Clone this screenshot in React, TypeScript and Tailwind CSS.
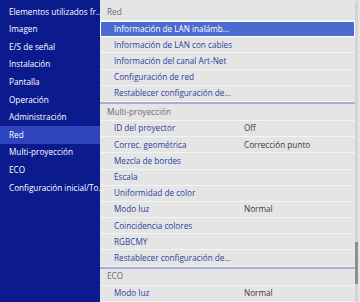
const menu = [
  "Elementos utilizados fr...",
  "Imagen",
  "E/S de señal",
  "Instalación",
  "Pantalla",
  "Operación",
  "Administración",
  "Red",
  "Multi-proyección",
  "ECO",
  "Configuración inicial/To...",
];

type Row = { label: string; value?: string; active?: boolean };
type Group = { title: string; rows: Row[] };

const groups: Group[] = [
  {
    title: "Red",
    rows: [
      { label: "Información de LAN inalámb...", active: true },
      { label: "Información de LAN con cables" },
      { label: "Información del canal Art-Net" },
      { label: "Configuración de red" },
      { label: "Restablecer configuración de..." },
    ],
  },
  {
    title: "Multi-proyección",
    rows: [
      { label: "ID del proyector", value: "Off" },
      { label: "Correc. geométrica", value: "Corrección punto" },
      { label: "Mezcla de bordes" },
      { label: "Escala" },
      { label: "Uniformidad de color" },
      { label: "Modo luz", value: "Normal" },
      { label: "Coincidencia colores" },
      { label: "RGBCMY" },
      { label: "Restablecer configuración de..." },
    ],
  },
  {
    title: "ECO",
    rows: [{ label: "Modo luz", value: "Normal" }],
  },
];

export default function App() {
  return (
    <div
      className="flex h-[302px] w-[360px] overflow-hidden bg-[#e5e5e5] text-[8.2px]"
      style={{ fontFamily: '"Open Sans", "Noto Sans", sans-serif' }}
    >
      {/* Menú lateral */}
      <aside className="flex w-[100px] shrink-0 flex-col bg-[#0b1a8d] pt-[3px]">
        {menu.map((item) => (
          <div
            key={item}
            className={
              item === "Red"
                ? "flex h-[17.6px] items-center whitespace-nowrap bg-[#2e44bd] pl-[9px] text-white"
                : "flex h-[17.6px] items-center whitespace-nowrap pl-[9px] text-white"
            }
          >
            {item}
          </div>
        ))}
      </aside>

      {/* Lista de ajustes */}
      <div className="flex flex-1">
        <div className="flex flex-1 flex-col pt-[4px]">
          {groups.map((group, i) => (
            <div key={group.title} className={i > 0 ? "border-t-2 border-[#a7acd9]" : ""}>
              <div className="flex h-[17px] items-center border-b border-[#f4f4f4] pl-[7px] text-[#6b6b6b]">
                {group.title}
              </div>
              {group.rows.map((row) => (
                <div
                  key={row.label}
                  className={
                    row.active
                      ? "flex h-[16.2px] items-center border border-white bg-[#4b6bd0] pl-[13px] text-white"
                      : "flex h-[16.2px] items-center border-b border-[#f4f4f4] pl-[14px] text-[#2d3f9f]"
                  }
                >
                  <span className="w-[130px] whitespace-nowrap">{row.label}</span>
                  {row.value ? <span className="whitespace-nowrap text-[#3a3a3a]">{row.value}</span> : null}
                </div>
              ))}
            </div>
          ))}
        </div>

        {/* Barra de desplazamiento */}
        <div className="my-[1px] mr-[2px] flex w-[3px] flex-col bg-[#d4d4d4]">
          <div className="mt-[241px] h-[42px] bg-[#8e8e8e]" />
        </div>
      </div>
    </div>
  );
}
